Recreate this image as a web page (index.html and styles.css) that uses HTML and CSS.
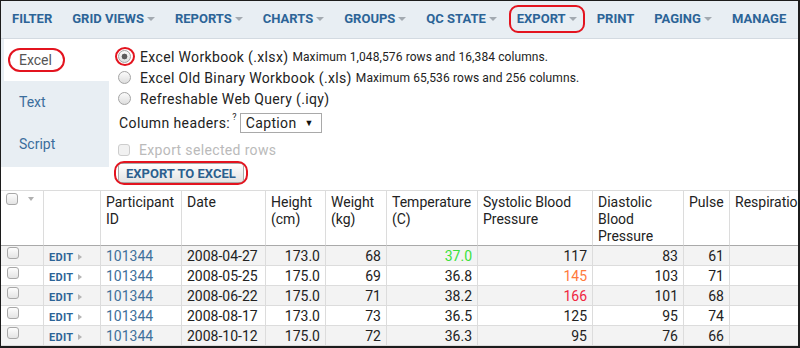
FILE: index.html
```html
<!DOCTYPE html>
<html lang="en">
<head>
<meta charset="utf-8">
<title>Export</title>
<link rel="stylesheet" href="styles.css">
</head>
<body>
<div class="frame">
  <nav class="toolbar">
    <span class="nav-item">Filter</span>
    <span class="nav-item">Grid Views<i class="caret"></i></span>
    <span class="nav-item">Reports<i class="caret"></i></span>
    <span class="nav-item">Charts<i class="caret"></i></span>
    <span class="nav-item">Groups<i class="caret"></i></span>
    <span class="nav-item">QC State<i class="caret"></i></span>
    <span class="nav-item callout callout-nav">Export<i class="caret"></i></span>
    <span class="nav-item">Print</span>
    <span class="nav-item">Paging<i class="caret"></i></span>
    <span class="nav-item">Manage</span>
  </nav>

  <section class="export-panel">
    <ul class="tabs">
      <li class="tab active"><span class="tab-label callout callout-tab">Excel</span></li>
      <li class="tab">Text</li>
      <li class="tab">Script</li>
    </ul>
    <div class="options">
      <label class="option">
        <span class="radio-box callout callout-ring"><input class="radio" type="radio" name="fmt" checked></span>
        <span class="opt-name">Excel Workbook (.xlsx)</span>
        <small class="opt-note">Maximum 1,048,576 rows and 16,384 columns.</small>
      </label>
      <label class="option">
        <span class="radio-box"><input class="radio" type="radio" name="fmt"></span>
        <span class="opt-name">Excel Old Binary Workbook (.xls)</span>
        <small class="opt-note">Maximum 65,536 rows and 256 columns.</small>
      </label>
      <label class="option">
        <span class="radio-box"><input class="radio" type="radio" name="fmt"></span>
        <span class="opt-name">Refreshable Web Query (.iqy)</span>
      </label>
      <div class="headers-row">
        <span>Column headers:</span><sup class="help">?</sup>
        <span class="select">Caption<i class="select-arrow">▼</i></span>
      </div>
      <label class="option disabled">
        <span class="radio-box"><input class="check" type="checkbox" disabled></span>
        <span class="opt-name">Export selected rows</span>
      </label>
      <div class="btn-row">
        <button class="btn callout callout-btn" type="button">Export to Excel</button>
      </div>
    </div>
  </section>

  <div class="grid-wrap">
    <table class="grid">
      <thead>
        <tr>
          <th class="c-sel"><span class="sel-head"><input class="check" type="checkbox"><i class="sel-caret"></i></span></th>
          <th class="c-edit"></th>
          <th class="c-pid">Participant ID</th>
          <th class="c-date">Date</th>
          <th class="c-height">Height (cm)</th>
          <th class="c-weight">Weight (kg)</th>
          <th class="c-temp">Temperature (C)</th>
          <th class="c-sys">Systolic Blood Pressure</th>
          <th class="c-dia">Diastolic Blood Pressure</th>
          <th class="c-pulse">Pulse</th>
          <th class="c-resp">Respiration Rate</th>
        </tr>
      </thead>
      <tbody>
        <tr>
          <td class="sel"><input class="check" type="checkbox"></td>
          <td><a class="edit-link">Edit</a></td>
          <td class="link">101344</td>
          <td>2008-04-27</td>
          <td class="num">173.0</td>
          <td class="num">68</td>
          <td class="num t-normal">37.0</td>
          <td class="num">117</td>
          <td class="num">83</td>
          <td class="num">61</td>
          <td class="num">16</td>
        </tr>
        <tr>
          <td class="sel"><input class="check" type="checkbox"></td>
          <td><a class="edit-link">Edit</a></td>
          <td class="link">101344</td>
          <td>2008-05-25</td>
          <td class="num">175.0</td>
          <td class="num">69</td>
          <td class="num">36.8</td>
          <td class="num t-warn">145</td>
          <td class="num">103</td>
          <td class="num">71</td>
          <td class="num">18</td>
        </tr>
        <tr>
          <td class="sel"><input class="check" type="checkbox"></td>
          <td><a class="edit-link">Edit</a></td>
          <td class="link">101344</td>
          <td>2008-06-22</td>
          <td class="num">175.0</td>
          <td class="num">71</td>
          <td class="num">38.2</td>
          <td class="num t-high">166</td>
          <td class="num">101</td>
          <td class="num">68</td>
          <td class="num">17</td>
        </tr>
        <tr>
          <td class="sel"><input class="check" type="checkbox"></td>
          <td><a class="edit-link">Edit</a></td>
          <td class="link">101344</td>
          <td>2008-08-17</td>
          <td class="num">173.0</td>
          <td class="num">73</td>
          <td class="num">36.5</td>
          <td class="num">125</td>
          <td class="num">95</td>
          <td class="num">74</td>
          <td class="num">16</td>
        </tr>
        <tr>
          <td class="sel"><input class="check" type="checkbox"></td>
          <td><a class="edit-link">Edit</a></td>
          <td class="link">101344</td>
          <td>2008-10-12</td>
          <td class="num">175.0</td>
          <td class="num">72</td>
          <td class="num">36.3</td>
          <td class="num">95</td>
          <td class="num">76</td>
          <td class="num">66</td>
          <td class="num">15</td>
        </tr>
      </tbody>
    </table>
  </div>
</div>
</body>
</html>
```

FILE: styles.css
```css
* { box-sizing: border-box; }

body {
  margin: 0;
  font-family: Roboto, "Liberation Sans", Arial, sans-serif;
  color: #222;
  background: #fff;
}

.frame {
  width: 800px;
  height: 348px;
  border-style: solid;
  border-color: #1c1c1c;
  border-width: 1px 2px 2px 1px;
  overflow: hidden;
  display: flex;
  flex-direction: column;
  background: #fff;
}

/* ---------- toolbar ---------- */
.toolbar {
  display: flex;
  flex: none;
  height: 38px;
  padding-left: 1px;
  background: #e8eef3;
  border-bottom: 1px solid #d3dae1;
}

.nav-item {
  position: relative;
  display: flex;
  align-items: center;
  padding: 0 10px 3px;
  font-size: 13px;
  font-weight: 700;
  text-transform: uppercase;
  color: #2c6497;
  white-space: nowrap;
}

.caret {
  width: 0;
  height: 0;
  margin-left: 3px;
  margin-top: 1px;
  border-left: 4px solid transparent;
  border-right: 4px solid transparent;
  border-top: 4px solid #a3aab1;
}

/* red annotation outlines */
.callout { position: relative; }
.callout::after {
  content: "";
  position: absolute;
  border: 2px solid #e3141f;
  pointer-events: none;
}
.callout-nav::after { top: 4px; bottom: 5px; left: 2px; right: 2px; border-radius: 9px; }
.callout-tab::after { top: -4px; bottom: -3px; left: -11px; right: -13px; border-radius: 12px; }
.callout-ring::after { top: -3px; bottom: -3px; left: -3px; right: -4px; border-radius: 50%; }
.callout-btn::after { top: -3px; bottom: -3px; left: -5px; right: -5px; border-radius: 10px; }

/* ---------- export panel ---------- */
.export-panel {
  display: flex;
  flex: none;
  height: 151px;
}

.tabs {
  flex: none;
  width: 108px;
  height: 128px;
  margin: 0;
  padding: 0 0 0 3px;
  list-style: none;
  background: #e8eef3;
}

.tab {
  display: flex;
  align-items: center;
  height: 42px;
  padding-left: 15px;
  font-size: 14px;
  line-height: 17px;
  color: #3b6d9c;
}

.tab.active {
  background: #fff;
  color: #555;
}

.options {
  flex: 1;
  padding: 7px 0 0 9px;
  font-size: 14px;
  letter-spacing: 0.35px;
}

.option {
  display: flex;
  align-items: center;
  height: 21px;
  white-space: nowrap;
}

.radio-box {
  display: flex;
  margin-right: 9px;
}

.opt-note {
  font-size: 12px;
  letter-spacing: 0.1px;
  margin-left: 4px;
}

.radio {
  appearance: none;
  width: 13px;
  height: 13px;
  margin: 0;
  border: 1px solid #a4a4a4;
  border-radius: 50%;
  background: linear-gradient(#fbfbfb, #dedede);
}

.radio:checked {
  background: radial-gradient(circle, #5c5c5c 0 2.6px, transparent 3.2px), linear-gradient(#fbfbfb, #dedede);
}

.check {
  appearance: none;
  display: block;
  width: 12px;
  height: 12px;
  margin: 0;
  border: 1px solid #a8a8a8;
  border-radius: 3px;
  background: linear-gradient(#fdfdfd, #e4e4e4);
}

.check:disabled {
  border-color: #cdcdcd;
  background: #f1f1f1;
}

.headers-row {
  display: flex;
  align-items: center;
  height: 22px;
  margin-top: 3px;
  padding-left: 1px;
  white-space: nowrap;
  letter-spacing: 0.4px;
}

.help {
  align-self: flex-start;
  font-size: 9px;
  line-height: 1;
  margin: 1px 3px 0 2px;
}

.select {
  display: flex;
  align-items: center;
  justify-content: space-between;
  width: 82px;
  height: 20px;
  padding: 0 7px 0 5px;
  border: 1px solid #a9a9a9;
  background: #fff;
  letter-spacing: 0.35px;
}

.select-arrow {
  font-style: normal;
  font-size: 9px;
  color: #111;
}

.option.disabled {
  margin-top: 5px;
  color: #bababa;
}

.btn-row {
  display: flex;
  margin-top: 3px;
  letter-spacing: 0;
}

.btn {
  height: 20px;
  padding: 0 7px;
  border: 1px solid #a9a9a9;
  border-radius: 3px;
  background: linear-gradient(#ffffff, #e3e3e3);
  font-family: Roboto, "Liberation Sans", Arial, sans-serif;
  font-size: 13px;
  font-weight: 700;
  text-transform: uppercase;
  color: #2c5f8e;
}

/* ---------- grid ---------- */
.grid-wrap {
  flex: 1;
  overflow: hidden;
}

.grid {
  width: 889px;
  table-layout: fixed;
  border-collapse: separate;
  border-spacing: 0;
  border-top: 1px solid #dcdcdc;
  font-size: 14px;
}

.grid th {
  height: 55px;
  padding: 3px 5px 0;
  vertical-align: top;
  text-align: left;
  font-weight: 400;
  line-height: 17px;
  color: #222;
  border-right: 1px solid #dcdcdc;
  border-bottom: 1px solid #a9a9a9;
}

.grid td {
  height: 20px;
  padding: 1px 5px 0;
  line-height: 18px;
  white-space: nowrap;
  border-right: 1px solid #dcdcdc;
  border-bottom: 1px solid #dcdcdc;
  vertical-align: top;
  overflow: hidden;
}

.grid tbody tr:nth-child(odd) td { background: #f3f3f3; }

.c-sel { width: 43px; }
.c-edit { width: 57px; }
.c-pid { width: 81px; }
.c-date { width: 84px; }
.c-height { width: 60px; }
.c-weight { width: 61px; }
.c-temp { width: 91px; }
.c-sys { width: 115px; }
.c-dia { width: 91px; }
.c-pulse { width: 46px; }
.c-resp { width: 160px; }

.grid th.c-sel { padding: 2px 0 0 5px; }

.sel-head {
  display: flex;
  align-items: center;
}

.sel-caret {
  width: 0;
  height: 0;
  margin-left: 10px;
  border-left: 3.5px solid transparent;
  border-right: 3.5px solid transparent;
  border-top: 4px solid #b0b0b0;
}

.grid td.sel { padding: 1px 0 0 6px; }

.edit-link {
  display: inline-flex;
  align-items: center;
  vertical-align: top;
  height: 18px;
  padding-top: 2px;
  font-size: 11px;
  line-height: 13px;
  font-weight: 700;
  text-transform: uppercase;
  color: #2c6497;
  letter-spacing: 0.3px;
}

.edit-link::after {
  content: "";
  width: 0;
  height: 0;
  margin-left: 5px;
  border-top: 3.5px solid transparent;
  border-bottom: 3.5px solid transparent;
  border-left: 4px solid #b5b5b5;
}

.link { color: #40709a; }
.num { text-align: right; }
.t-normal { color: #3be03b; }
.t-warn { color: #ff7a3d; }
.t-high { color: #f0263f; }
```
